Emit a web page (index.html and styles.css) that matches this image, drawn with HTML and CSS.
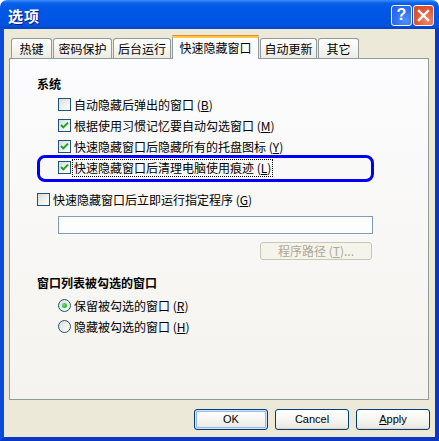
FILE: index.html
```html
<!DOCTYPE html>
<html lang="zh-CN">
<head>
<meta charset="utf-8">
<title>选项</title>
<link rel="stylesheet" href="styles.css">
</head>
<body>
<div class="window">
  <div class="titlebar">
    <span class="title">选项</span>
    <div class="tb-buttons">
      <div class="tb-btn help">?</div>
      <div class="tb-btn close">
        <svg width="13" height="13" viewBox="0 0 13 13"><path d="M2 2 L11 11 M11 2 L2 11" stroke="#fff" stroke-width="2.4" stroke-linecap="square"/></svg>
      </div>
    </div>
  </div>
  <div class="frame">
    <div class="tabs">
      <div class="tab w41">热键</div>
      <div class="tab w59">密码保护</div>
      <div class="tab w58">后台运行</div>
      <div class="tab active">快速隐藏窗口</div>
      <div class="tab w57">自动更新</div>
      <div class="tab w41">其它</div>
    </div>
    <div class="panel">
      <div class="heading">系统</div>
      <div class="group">
        <div class="row"><span class="cb"></span><span class="label">自动隐藏后弹出的窗口 (<u>B</u>)</span></div>
        <div class="row"><span class="cb checked"><svg width="11" height="11" viewBox="0 0 11 11"><path d="M2 5 L4.3 7.4 L9 2.6" fill="none" stroke="#21a121" stroke-width="2"/></svg></span><span class="label">根据使用习惯记忆要自动勾选窗口 (<u>M</u>)</span></div>
        <div class="row"><span class="cb checked"><svg width="11" height="11" viewBox="0 0 11 11"><path d="M2 5 L4.3 7.4 L9 2.6" fill="none" stroke="#21a121" stroke-width="2"/></svg></span><span class="label">快速隐藏窗口后隐藏所有的托盘图标 (<u>Y</u>)</span></div>
        <div class="row marked"><span class="cb checked"><svg width="11" height="11" viewBox="0 0 11 11"><path d="M2 5 L4.3 7.4 L9 2.6" fill="none" stroke="#21a121" stroke-width="2"/></svg></span><span class="label focus">快速隐藏窗口后清理电脑使用痕迹 (<u>L</u>)</span></div>
      </div>
      <div class="row run"><span class="cb"></span><span class="label">快速隐藏窗口后立即运行指定程序 (<u>G</u>)</span></div>
      <div class="field">
        <div class="input"></div>
        <div class="browse-row"><div class="btn-disabled">程序路径 (<u>T</u>)...</div></div>
      </div>
      <div class="heading h2">窗口列表被勾选的窗口</div>
      <div class="group radios">
        <div class="row"><span class="rb on"></span><span class="label">保留被勾选的窗口 (<u>R</u>)</span></div>
        <div class="row"><span class="rb"></span><span class="label">隐藏被勾选的窗口 (<u>H</u>)</span></div>
      </div>
    </div>
    <div class="footer">
      <div class="btn default">OK</div>
      <div class="btn">Cancel</div>
      <div class="btn"><u>A</u>pply</div>
    </div>
  </div>
</div>
</body>
</html>
```
FILE: styles.css
```css
html, body {
  margin: 0;
  padding: 0;
  background: #ffffff;
}
body {
  font-family: "Noto Sans CJK SC", "DejaVu Sans", sans-serif;
  font-size: 12px;
  color: #000;
}
.window {
  width: 439px;
  height: 441px;
  display: flex;
  flex-direction: column;
}
.titlebar {
  height: 29px;
  flex: none;
  display: flex;
  align-items: center;
  justify-content: space-between;
  padding: 1px 5px 0 8px;
  box-sizing: border-box;
  border-radius: 7px 7px 0 0;
  background: linear-gradient(to bottom, #3c8ffc 0px, #0a61ea 3px, #0058e6 8px, #0055e4 18px, #0152df 25px, #0044c6 29px);
}
.title {
  color: #fff;
  font-size: 15px;
  font-weight: bold;
  text-shadow: 1px 1px 0 #0a1a8a;
  letter-spacing: 1px;
}
.tb-buttons {
  display: flex;
  gap: 1px;
}
.tb-btn {
  width: 21px;
  height: 21px;
  box-sizing: border-box;
  border: 1px solid #fff;
  border-radius: 3px;
  display: flex;
  align-items: center;
  justify-content: center;
}
.help {
  background: radial-gradient(circle at 70% 75%, #4f8ffb 0%, #2e6ef0 55%, #245fe0 100%);
  color: #fff;
  font-family: "Liberation Sans", sans-serif;
  font-weight: bold;
  font-size: 16px;
  line-height: 1;
}
.close {
  background: radial-gradient(circle at 70% 75%, #f08a68 0%, #e35a36 50%, #d4441f 100%);
}
.frame {
  flex: 1;
  background: #ece9d8;
  border-left: 4px solid #0a4bd9;
  border-right: 4px solid #0838c4;
  border-bottom: 4px solid #0838c4;
  display: flex;
  flex-direction: column;
}
.tabs {
  display: flex;
  align-items: flex-end;
  gap: 1px;
  height: 23px;
  margin: 6px 0 0 7px;
  position: relative;
  z-index: 1;
}
.tab {
  height: 20px;
  box-sizing: border-box;
  border: 1px solid #919b9c;
  border-bottom: none;
  border-radius: 3px 3px 0 0;
  background: linear-gradient(to bottom, #ffffff 0%, #f7f6f2 50%, #ecebe5 100%);
  display: flex;
  align-items: center;
  justify-content: center;
  line-height: 1;
}
.w41 { width: 41px; }
.w57 { width: 57px; }
.w58 { width: 58px; }
.w59 { width: 59px; }
.tab.active {
  width: 87px;
  height: 24px;
  margin-bottom: -1px;
  background: #fcfcfe;
  border-top: 3px solid #ffc83c;
  box-shadow: inset 0 0 0 0 transparent;
  position: relative;
  padding-bottom: 2px;
}
.tab.active::before {
  content: "";
  position: absolute;
  left: -1px;
  right: -1px;
  top: -3px;
  height: 1px;
  background: #e68b2c;
  border-radius: 3px 3px 0 0;
}
.panel {
  margin: 0 6px 0 5px;
  height: 342px;
  box-sizing: border-box;
  border: 1px solid #919b9c;
  border-top-color: #919b9c;
  background: linear-gradient(to bottom, #fcfcfe 0%, #f4f3ee 100%);
  padding: 15px 0 0 27px;
  display: flex;
  flex-direction: column;
  align-items: flex-start;
}
.heading {
  height: 20px;
  line-height: 20px;
  font-weight: bold;
}
.group {
  padding-left: 21px;
  display: flex;
  flex-direction: column;
}
.row {
  height: 21px;
  display: flex;
  align-items: center;
  gap: 3px;
  white-space: nowrap;
}
.label {
  line-height: 16px;
}
.label u {
  text-underline-offset: 1px;
}
.cb {
  width: 13px;
  height: 13px;
  box-sizing: border-box;
  border: 1px solid #1c5180;
  background: linear-gradient(135deg, #dcdcd7 0%, #f0f0ec 55%, #ffffff 100%);
  display: flex;
  align-items: center;
  justify-content: center;
  flex: none;
}
.marked {
  position: relative;
}
.marked::before {
  content: "";
  position: absolute;
  left: -21px;
  top: -2px;
  width: 337px;
  height: 27px;
  box-sizing: border-box;
  border: 3px solid #0000f4;
  border-radius: 8px;
}
.focus {
  outline: 1px dotted #000;
  outline-offset: 0;
  padding: 0 1px;
  margin-left: -1px;
}
.run {
  margin-top: 11px;
}
.field {
  margin-left: 21px;
  width: 315px;
  display: flex;
  flex-direction: column;
}
.input {
  margin-top: 6px;
  height: 18px;
  box-sizing: border-box;
  border: 1px solid #7f9db9;
  background: #fdfdfd;
}
.browse-row {
  display: flex;
  justify-content: flex-end;
  padding-right: 1px;
  margin-top: 8px;
}
.btn-disabled {
  width: 112px;
  height: 18px;
  box-sizing: border-box;
  border: 1px solid #c9c7ba;
  border-radius: 3px;
  background: #f5f4ea;
  color: #aca899;
  display: flex;
  align-items: center;
  justify-content: center;
  line-height: 1;
}
.h2 {
  margin-top: 13px;
}
.radios {
  margin-top: 2px;
}
.rb {
  width: 13px;
  height: 13px;
  box-sizing: border-box;
  border: 1px solid #1c5180;
  border-radius: 50%;
  background: linear-gradient(135deg, #dcdcd7 0%, #f0f0ec 55%, #ffffff 100%);
  flex: none;
  position: relative;
}
.rb.on::after {
  content: "";
  position: absolute;
  left: 3px;
  top: 3px;
  width: 5px;
  height: 5px;
  border-radius: 50%;
  background: radial-gradient(circle at 40% 40%, #7be27b 0%, #2fb32f 60%, #1f9a1f 100%);
}
.footer {
  display: flex;
  justify-content: flex-end;
  gap: 7px;
  margin-top: 9px;
  padding-right: 5px;
}
.btn {
  width: 74px;
  height: 21px;
  box-sizing: border-box;
  border: 1px solid #003c74;
  border-radius: 3px;
  background: linear-gradient(to bottom, #ffffff 0%, #f7f7f4 45%, #eceae0 90%, #d8d4c6 100%);
  font-family: "Liberation Sans", "DejaVu Sans", sans-serif;
  font-size: 11px;
  display: flex;
  align-items: center;
  justify-content: center;
  line-height: 1;
}
.btn.default {
  box-shadow: inset 0 0 0 1px #cee7ff, inset 0 0 0 2px #98b8f3;
}
```
